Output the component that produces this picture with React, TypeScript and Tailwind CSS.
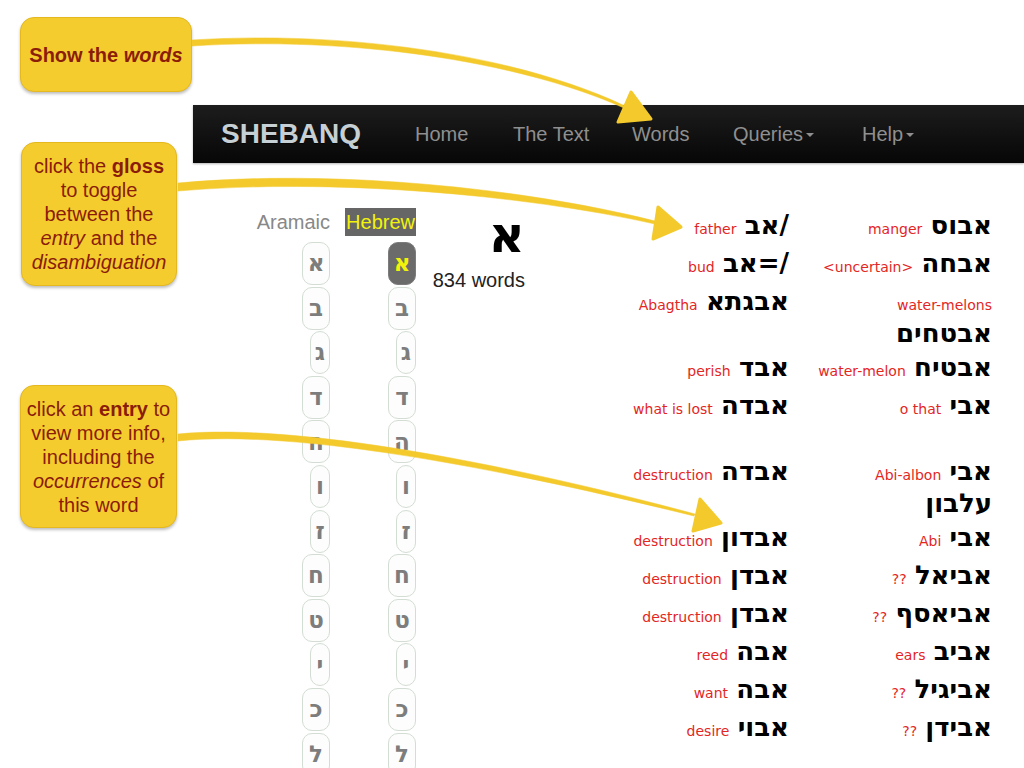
import React from 'react';

type Entry = { g: string; h: string };
type Row = { l: Entry; r: Entry; tall?: boolean };

const rows: Row[] = [
  { l: { g: 'father', h: '/אב' }, r: { g: 'manger', h: 'אבוס' } },
  { l: { g: 'bud', h: '/=אב' }, r: { g: '<uncertain>', h: 'אבחה' } },
  { l: { g: 'Abagtha', h: 'אבגתא' }, r: { g: 'water-melons', h: 'אבטחים' }, tall: true },
  { l: { g: 'perish', h: 'אבד' }, r: { g: 'water-melon', h: 'אבטיח' } },
  { l: { g: 'what is lost', h: 'אבדה' }, r: { g: 'o that', h: 'אבי' }, tall: true },
  { l: { g: 'destruction', h: 'אבדה' }, r: { g: 'Abi-albon', h: 'אבי עלבון' }, tall: true },
  { l: { g: 'destruction', h: 'אבדון' }, r: { g: 'Abi', h: 'אבי' } },
  { l: { g: 'destruction', h: 'אבדן' }, r: { g: '??', h: 'אביאל' } },
  { l: { g: 'destruction', h: 'אבדן' }, r: { g: '??', h: 'אביאסף' } },
  { l: { g: 'reed', h: 'אבה' }, r: { g: 'ears', h: 'אביב' } },
  { l: { g: 'want', h: 'אבה' }, r: { g: '??', h: 'אביגיל' } },
  { l: { g: 'desire', h: 'אבוי' }, r: { g: '??', h: 'אבידן' } },
];

const letters = ['א', 'ב', 'ג', 'ד', 'ה', 'ו', 'ז', 'ח', 'ט', 'י', 'כ', 'ל'];
const narrow = ['ג', 'ו', 'ז', 'י'];

const Callout: React.FC<{ className: string; children: React.ReactNode }> = ({ className, children }) => (
  <div
    className={`flex flex-col items-center justify-center rounded-[14px] border border-[#e4b81e] bg-[#f5cc2e] text-center text-[20px] leading-[24px] text-[#8a1c08] shadow-[0_2px_3px_rgba(0,0,0,0.25)] ${className}`}
  >
    {children}
  </div>
);

const LetterColumn: React.FC<{ label: string; active: boolean; className: string }> = ({ label, active, className }) => (
  <div className={`flex flex-col items-end ${className}`}>
    {active ? (
      <span className="h-[28px] bg-[#666] px-[1px] text-[20px] leading-[28px] text-[#f2f20c]">{label}</span>
    ) : (
      <span className="h-[28px] text-[20px] leading-[28px] text-[#888]">{label}</span>
    )}
    <div className="mt-[6px] flex flex-col items-end gap-[1.6px]">
      {letters.map((l, i) => {
        const on = active && i === 0;
        const w = narrow.includes(l) ? 'w-[20px]' : 'w-[28px]';
        return (
          <div
            key={l}
            className={`flex h-[43px] items-center justify-center rounded-[10px] border font-['DejaVu_Sans',sans-serif] text-[23px] font-bold ${w} ${
              on ? 'border-[#7c7c7c] bg-[#6b6b6b] text-[#f2f20c]' : 'border-[#d3ddd3] bg-[#fcfdfc] text-[#7d7d7d]'
            }`}
          >
            {l}
          </div>
        );
      })}
    </div>
  </div>
);

const Cell: React.FC<{ e: Entry; className: string }> = ({ e, className }) => (
  <div className={`text-right font-['DejaVu_Sans',sans-serif] text-[26px] leading-[28px] ${className}`}>
    <span className="text-[14px] text-[#e3261f]">{e.g}</span>{' '}
    <bdi dir="rtl" className="font-bold text-black">
      {e.h}
    </bdi>
  </div>
);

const Arrows = () => (
  <svg className="pointer-events-none absolute left-0 top-0" width="1024" height="768">
    <g fill="#f3c92c" stroke="#f3c92c" strokeLinejoin="round">
      <path strokeWidth="0.5" d="M192,40 C350,30 520,56 625,106 L624,108 C519,61 350,36 192,46 Z" />
      <polygon strokeWidth="3" points="631,92 618,122 651,119" />
      <path strokeWidth="0.5" d="M178,183 C330,169 520,187 655,221 L655,224 C520,194 330,178 178,191 Z" />
      <polygon strokeWidth="3" points="658,207 653,239 681,227" />
      <path strokeWidth="0.5" d="M178,434 C300,422 520,467 695,514 L694,516 C520,473 300,428 178,441 Z" />
      <polygon strokeWidth="3" points="700,499 693,531 721,523" />
    </g>
  </svg>
);

export default function App() {
  return (
    <div className="relative flex h-[768px] w-[1024px] overflow-hidden bg-white font-['Liberation_Sans',Arial,sans-serif]">
      <div className="flex w-[193px] shrink-0 flex-col">
        <Callout className="ml-[20px] mt-[17px] h-[75px] w-[172px]">
          <p className="font-bold">
            Show the <em>words</em>
          </p>
        </Callout>
        <Callout className="ml-[21px] mt-[50px] h-[144px] w-[156px]">
          <p>
            click the <b>gloss</b>
          </p>
          <p>to toggle</p>
          <p>between the</p>
          <p>
            <em>entry</em> and the
          </p>
          <p>
            <em>disambiguation</em>
          </p>
        </Callout>
        <Callout className="ml-[20px] mt-[99px] h-[143px] w-[157px]">
          <p>
            click an <b>entry</b> to
          </p>
          <p>view more info,</p>
          <p>including the</p>
          <p>
            <em>occurrences</em> of
          </p>
          <p>this word</p>
        </Callout>
      </div>

      <div className="flex-1 pt-[105px]">
        <div className="flex h-[58px] items-center bg-gradient-to-b from-[#1d1d1d] to-[#070707] pl-[28px] text-[20px] text-[#8f8f8f] shadow-[0_1px_2px_rgba(0,0,0,0.3)]">
          <span className="w-[194px] text-[28px] font-bold text-[#c6cfd3] [text-shadow:0_1px_1px_rgba(0,0,0,0.6)]">
            SHEBANQ
          </span>
          <span className="w-[98px]">Home</span>
          <span className="w-[119px]">The Text</span>
          <span className="w-[101px]">Words</span>
          <span className="flex w-[129px] items-center">
            Queries
            <span className="ml-[3px] mt-[2px] inline-block border-x-[4px] border-t-[4px] border-x-transparent border-t-[#8f8f8f]" />
          </span>
          <span className="flex items-center">
            Help
            <span className="ml-[3px] mt-[2px] inline-block border-x-[4px] border-t-[4px] border-x-transparent border-t-[#8f8f8f]" />
          </span>
        </div>

        <div className="flex items-start pt-[45px]">
          <LetterColumn label="Aramaic" active={false} className="ml-[57px] w-[80px]" />
          <LetterColumn label="Hebrew" active className="ml-[15px] w-[71px]" />

          <div className="ml-[9px] w-[100px] text-right">
            <div className="h-[54px] font-['DejaVu_Sans',sans-serif] text-[50px] font-bold leading-[54px] text-black">
              א
            </div>
            <div className="mt-[6px] text-[20px] leading-[24px] text-[#222]">834 words</div>
          </div>

          <div className="-mt-[2px] ml-[62px] flex flex-col">
            {rows.map((r, i) => (
              <div key={i} className={`flex items-start py-[5px] ${r.tall ? 'h-[66px]' : 'h-[38px]'}`}>
                <Cell e={r.l} className="w-[202px]" />
                <Cell e={r.r} className="ml-[17px] w-[186px]" />
              </div>
            ))}
          </div>
        </div>
      </div>

      <Arrows />
    </div>
  );
}
